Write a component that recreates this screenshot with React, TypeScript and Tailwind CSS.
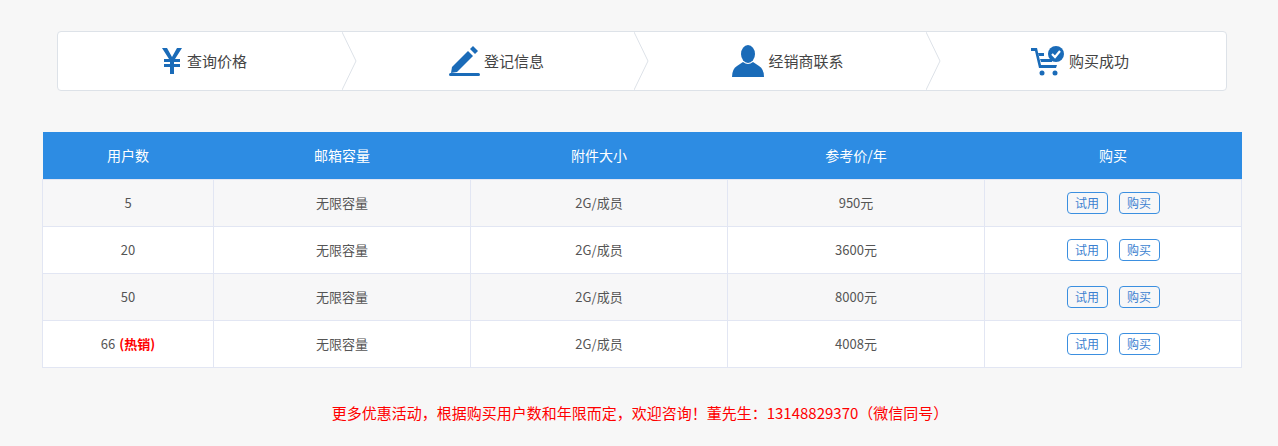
const font = { fontFamily: '"Noto Sans CJK SC", "Noto Sans", sans-serif' };

function Yen() {
  return (
    <svg width="22" height="28" viewBox="0 0 22 28" fill="#1a6bb8">
      <path d="M1 1h5l5 9 5-9h5l-7 11h5v3h-6v2h6v3h-6v7h-4v-7H3v-3h6v-2H3v-3h5z" />
    </svg>
  );
}
function Pencil() {
  return (
    <svg width="32" height="30" viewBox="0 0 32 30" fill="#1a6bb8">
      <path d="M4 21 L20 5 L25 10 L9 26 L3 27 Z" />
      <path d="M22 3 L25 0 L30 5 L27 8 Z" />
      <rect x="1" y="27" width="31" height="3" rx="1.5" />
    </svg>
  );
}
function User() {
  return (
    <svg width="32" height="32" viewBox="0 0 32 32" fill="#1a6bb8">
      <ellipse cx="16" cy="9" rx="7" ry="9" />
      <path d="M11 17 Q16 21 21 17 L27 21 Q32 24 32 32 L0 32 Q0 24 5 21 Z" />
    </svg>
  );
}
function Cart() {
  return (
    <svg width="34" height="32" viewBox="0 0 34 32" fill="#1a6bb8">
      <path d="M0 3h6l4 17h16l-1 3H8L4 6H0z" />
      <path d="M7 8h6v3H8z M9 14h12v3H10z" />
      <circle cx="11" cy="28" r="2.5" />
      <circle cx="24" cy="28" r="2.5" />
      <circle cx="25" cy="9" r="8" />
      <path d="M21 9l3 3 5-6" stroke="#fff" strokeWidth="2.2" fill="none" />
    </svg>
  );
}

const steps = [
  { icon: <Yen />, label: "查询价格" },
  { icon: <Pencil />, label: "登记信息" },
  { icon: <User />, label: "经销商联系" },
  { icon: <Cart />, label: "购买成功" },
];

const rows = [
  { users: "5", price: "950元" },
  { users: "20", price: "3600元" },
  { users: "50", price: "8000元" },
  { users: "66", price: "4008元", hot: true },
];

export default function App() {
  return (
    <div className="min-h-[446px] bg-[#f7f7f7] pt-[31px]" style={font}>
      <div className="mx-[57px] w-[1170px] h-[60px] bg-white border border-[#dde2e8] rounded-sm flex">
        {steps.map((s, i) => (
          <div key={i} className="relative flex-1 flex items-center justify-center gap-1">
            {s.icon}
            <span className="text-[15px] text-[#444]">{s.label}</span>
            {i < 3 && (
              <svg className="absolute right-[-8px] top-0" width="16" height="58" viewBox="0 0 16 58">
                <path d="M0 0 L14 29 L0 58" stroke="#dde2e8" strokeWidth="1" fill="none" />
              </svg>
            )}
          </div>
        ))}
      </div>

      <table className="mt-[41px] ml-[42px] w-[1200px] border-collapse text-[13px] text-[#555] text-center">
        <thead>
          <tr className="bg-[#2d8ce3] text-white h-[47px]">
            <th className="w-[171px] font-normal text-[14px]">用户数</th>
            <th className="w-[257px] font-normal text-[14px]">邮箱容量</th>
            <th className="w-[257px] font-normal text-[14px]">附件大小</th>
            <th className="w-[257px] font-normal text-[14px]">参考价/年</th>
            <th className="font-normal text-[14px]">购买</th>
          </tr>
        </thead>
        <tbody>
          {rows.map((r, i) => (
            <tr key={i} className={`h-[47px] ${i % 2 === 0 ? "bg-[#f7f7f8]" : "bg-white"}`}>
              <td className="border border-[#e2e6f3]">
                {r.users}
                {r.hot && <span className="ml-1 text-[#ff0000] font-bold">(热销)</span>}
              </td>
              <td className="border border-[#e2e6f3]">无限容量</td>
              <td className="border border-[#e2e6f3]">2G/成员</td>
              <td className="border border-[#e2e6f3]">{r.price}</td>
              <td className="border border-[#e2e6f3]">
                <div className="flex justify-center gap-[11px]">
                  <button className="w-[41px] h-[22px] border border-[#3b8fe0] rounded text-[12px] text-[#3b7fd0] bg-transparent">试用</button>
                  <button className="w-[41px] h-[22px] border border-[#3b8fe0] rounded text-[12px] text-[#3b7fd0] bg-transparent">购买</button>
                </div>
              </td>
            </tr>
          ))}
        </tbody>
      </table>

      <p className="mt-[34px] text-center text-[15px] text-[#ff0000] pl-[2px]">
        更多优惠活动，根据购买用户数和年限而定，欢迎咨询！董先生：13148829370（微信同号）
      </p>
    </div>
  );
}
